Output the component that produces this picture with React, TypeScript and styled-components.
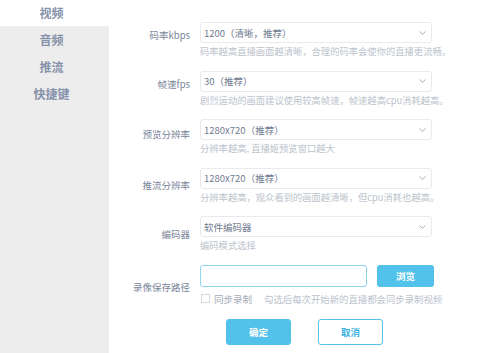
import React from 'react';
import styled, { createGlobalStyle } from 'styled-components';

const GlobalStyle = createGlobalStyle`
    html, body {
        margin: 0;
        padding: 0;
        background: #ffffff;
    }
    body {
        font-family: "Noto Sans CJK SC", "Noto Sans", sans-serif;
    }
`;

interface ISelectField {
    label: string;
    value: string;
    hint: string;
    drop: number;
}

const fields: ISelectField[] = [
    { label: '码率kbps', value: '1200（清晰，推荐）', hint: '码率越高直播画面越清晰，合理的码率会使你的直播更流畅。', drop: 6 },
    { label: '帧速fps', value: '30（推荐）', hint: '剧烈运动的画面建议使用较高帧速，帧速越高cpu消耗越高。', drop: 6 },
    { label: '预览分辨率', value: '1280x720（推荐）', hint: '分辨率越高, 直播姬预览窗口越大', drop: 8 },
    { label: '推流分辨率', value: '1280x720（推荐）', hint: '分辨率越高，观众看到的画面越清晰，但cpu消耗也越高。', drop: 10 },
    { label: '编码器', value: '软件编码器', hint: '编码模式选择', drop: 11 }
];

const menu = ['视频', '音频', '推流', '快捷键'];

const Chevron = () => (
    <svg width='7' height='4' viewBox='0 0 7 4'>
        <path d='M0.5 0.5 L3.5 3.3 L6.5 0.5' fill='none' stroke='#9aa4b6' strokeWidth='0.9' />
    </svg>
);

const App: React.FC = (): React.ReactElement => (
    <>
        <GlobalStyle />
        <Page>
            <Sidebar>
                {menu.map((item, i) => (
                    <MenuItem key={item} active={i === 0}>{item}</MenuItem>
                ))}
            </Sidebar>
            <Main>
                {fields.map(f => (
                    <Field key={f.label}>
                        <Label drop={f.drop}>{f.label}</Label>
                        <Control>
                            <Select>
                                <span>{f.value}</span>
                                <Chevron />
                            </Select>
                            <Hint>{f.hint}</Hint>
                        </Control>
                    </Field>
                ))}
                <Field>
                    <Label drop={15}>录像保存路径</Label>
                    <Control>
                        <PathRow>
                            <PathInput />
                            <BrowseButton>浏览</BrowseButton>
                        </PathRow>
                        <CheckRow>
                            <CheckBox />
                            <CheckText>同步录制</CheckText>
                            <CheckHint>勾选后每次开始新的直播都会同步录制视频</CheckHint>
                        </CheckRow>
                    </Control>
                </Field>
                <Actions>
                    <Button primary>确定</Button>
                    <Button>取消</Button>
                </Actions>
            </Main>
        </Page>
    </>
);

export default App;

const Page = styled.div`
    display: flex;
    width: 478px;
    height: 353px;
    overflow: hidden;
    background: #ffffff;
`;

const Sidebar = styled.div`
    width: 109px;
    flex-shrink: 0;
    background: #ededed;
    display: flex;
    flex-direction: column;
`;

const MenuItem = styled.div<{ active?: boolean }>`
    height: 27px;
    line-height: 27px;
    padding-right: 6px;
    text-align: center;
    font-size: 12px;
    font-weight: bold;
    color: #8592a9;
    background: ${p => (p.active ? '#ffffff' : 'transparent')};
    &:first-child {
        height: 26px;
        line-height: 26px;
    }
`;

const Main = styled.div`
    flex: 1;
    display: flex;
    flex-direction: column;
    gap: 12.5px;
    padding-top: 22px;
`;

const Field = styled.div`
    display: grid;
    grid-template-columns: 81px 234px;
    column-gap: 10px;
`;

const Label = styled.div<{ drop: number }>`
    padding-top: ${p => p.drop}px;
    text-align: right;
    font-size: 9.5px;
    line-height: 14px;
    color: #7a8598;
    white-space: nowrap;
`;

const Control = styled.div`
    display: flex;
    flex-direction: column;
`;

const Select = styled.div`
    box-sizing: border-box;
    width: 232px;
    height: 21px;
    display: flex;
    align-items: center;
    justify-content: space-between;
    padding: 0 5px 0 3px;
    border: 1px solid #e8eaee;
    border-radius: 3px;
    font-size: 9.5px;
    color: #6f7b8f;
    white-space: nowrap;
`;

const Hint = styled.div`
    margin-top: 1px;
    font-size: 9.3px;
    line-height: 14px;
    color: #bcc3cd;
    white-space: nowrap;
`;

const PathRow = styled.div`
    display: flex;
    gap: 10px;
`;

const PathInput = styled.div`
    box-sizing: border-box;
    width: 167px;
    height: 22px;
    border: 1px solid #8fd5f0;
    border-radius: 3px;
`;

const BrowseButton = styled.div`
    width: 57px;
    height: 22px;
    border-radius: 3px;
    background: #52c2eb;
    color: #ffffff;
    font-size: 9.5px;
    font-weight: bold;
    line-height: 22px;
    text-align: center;
`;

const CheckRow = styled.div`
    display: flex;
    align-items: center;
    margin-top: 5px;
    height: 14px;
    white-space: nowrap;
`;

const CheckBox = styled.div`
    box-sizing: border-box;
    flex-shrink: 0;
    width: 9px;
    height: 9px;
    margin-left: 1px;
    border: 1px solid #d5d9de;
`;

const CheckText = styled.span`
    margin-left: 4px;
    font-size: 9.5px;
    color: #a3abb7;
`;

const CheckHint = styled.span`
    margin-left: 12px;
    font-size: 9.4px;
    color: #bcc3cd;
`;

const Actions = styled.div`
    display: flex;
    gap: 27px;
    padding-left: 117px;
    margin-top: 1px;
`;

const Button = styled.div<{ primary?: boolean }>`
    box-sizing: border-box;
    width: 65px;
    height: 26px;
    border-radius: 3px;
    border: 1px solid #52c2eb;
    background: ${p => (p.primary ? '#52c2eb' : '#ffffff')};
    color: ${p => (p.primary ? '#ffffff' : '#3fb2e2')};
    font-size: 9.5px;
    font-weight: bold;
    line-height: 24px;
    text-align: center;
`;
